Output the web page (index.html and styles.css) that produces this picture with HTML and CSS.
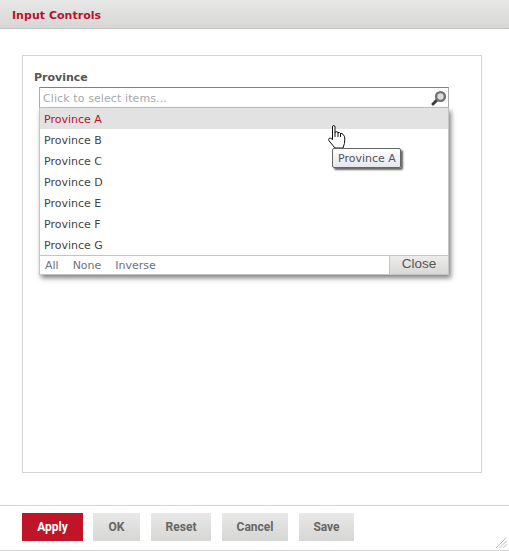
FILE: index.html
```html
<!DOCTYPE html>
<html lang="en">
<head>
  <meta charset="UTF-8" />
  <title>Input Controls</title>
  <link rel="stylesheet" href="styles.css">
</head>
<body>
  <div class="dialog">
    <div class="dialog-header">Input Controls</div>
    <div class="dialog-body">
      <div class="panel">
        <div class="field-label">Province</div>
        <div class="picker">
          <div class="picker-input">
            <span class="placeholder">Click to select items...</span>
            <svg class="search-icon" width="16" height="16" viewBox="0 0 16 16">
              <path d="M6 10 L2 14" stroke="#3a3a3a" stroke-width="3" stroke-linecap="round"/>
              <circle cx="9.5" cy="6.5" r="4.4" fill="#dcdcdc" stroke="#707070" stroke-width="2.4"/>
            </svg>
          </div>
          <div class="picker-menu">
            <ul class="item-list">
              <li class="item item-active">Province A</li>
              <li class="item">Province B</li>
              <li class="item">Province C</li>
              <li class="item">Province D</li>
              <li class="item">Province E</li>
              <li class="item">Province F</li>
              <li class="item">Province G</li>
            </ul>
            <div class="menu-footer">
              <div class="menu-links">
                <span>All</span>
                <span>None</span>
                <span>Inverse</span>
              </div>
              <div class="menu-close">Close</div>
            </div>
          </div>
        </div>
      </div>
    </div>
    <div class="dialog-footer">
      <button class="btn btn-primary">Apply</button>
      <button class="btn btn-ok">OK</button>
      <button class="btn btn-reset">Reset</button>
      <button class="btn btn-cancel">Cancel</button>
      <button class="btn btn-save">Save</button>
      <svg class="grip" width="11" height="11" viewBox="0 0 11 11">
        <path d="M0.5 10.5 L10.5 0.5 M4 10.5 L10.5 4 M7.5 10.5 L10.5 7.5" stroke="#8a8a8a" stroke-width="1" stroke-dasharray="1 0.6"/>
      </svg>
    </div>
  </div>

  <!-- hover state: mouse pointer and tooltip -->
  <svg class="hand-cursor" width="18" height="24" viewBox="0 0 18 24">
    <path d="M4.5 14.5 L4.5 2 Q4.5 0.5 5.7 0.5 Q7 0.5 7 2 L7 8 L7.6 6.8 Q9 6.2 10 7.5 Q11.5 7 12.2 8.4 Q14 8 15.2 9.5 Q16.8 11 16.8 14 L16.4 18.5 L15 23 L7 23 L1 15.8 Q0.2 14.3 1.2 13.3 Q2.5 12.5 4.5 14.5 Z" fill="#fff" stroke="#111" stroke-width="1" stroke-linejoin="round"/>
    <path d="M7 8 L7 12 M10 7.5 L10 12 M12.5 8.5 L12.5 12" stroke="#111" stroke-width="1" fill="none"/>
  </svg>
  <div class="tooltip">Province A</div>
</body>
</html>
```

FILE: styles.css
```css
* {
  box-sizing: border-box;
}
html, body {
  height: 100%;
}
body {
  margin: 0;
  font-family: 'DejaVu Sans', Verdana, sans-serif;
  color: #333;
  background: #fff;
  overflow: hidden;
}
.dialog {
  display: flex;
  flex-direction: column;
  height: 551px;
}
.dialog-header {
  height: 29px;
  padding: 0 12px;
  line-height: 31px;
  font-size: 11px;
  font-weight: bold;
  letter-spacing: 0.03px;
  color: #b9122e;
  background: linear-gradient(#e8e8e8, #d6d6d4);
  border-bottom: 1px solid #c4c4c4;
}
.dialog-body {
  flex: 1;
  padding: 26px 27px 32px 22px;
}
.panel {
  height: 418px;
  padding: 14px 32px 0 11px;
  border: 1px solid #d4d4d4;
}
.field-label {
  height: 17px;
  line-height: 16px;
  font-size: 11px;
  font-weight: bold;
  color: #555;
}
.picker {
  position: relative;
  margin-left: 5px;
  width: 410px;
}
.picker-input {
  display: flex;
  align-items: center;
  justify-content: space-between;
  height: 21px;
  padding: 0 1px 0 3px;
  border: 1px solid #ababab;
  border-top-color: #808080;
  border-bottom: 1px solid #c4c4c4;
}
.placeholder {
  padding-top: 2px;
  font-size: 11px;
  letter-spacing: 0.1px;
  color: #a8a8a8;
}
.search-icon {
  display: block;
}
.picker-menu {
  position: absolute;
  top: 21px;
  left: 0;
  width: 410px;
  background: #fff;
  border: 1px solid #c4c4c4;
  border-top: 0;
  box-shadow: 2px 3px 5px rgba(0, 0, 0, 0.5);
}
.item-list {
  margin: 0;
  padding: 0;
  list-style: none;
}
.item {
  height: 21px;
  padding-left: 4px;
  line-height: 23px;
  font-size: 11px;
  color: #444;
}
.item-active {
  background: #e2e2e2;
  color: #b9122e;
}
.menu-footer {
  display: flex;
  justify-content: space-between;
  height: 19px;
  border-top: 1px solid #c4c4c4;
}
.menu-links {
  display: flex;
  gap: 14px;
  padding-left: 5px;
  line-height: 19px;
  font-size: 11px;
  color: #6b7280;
}
.menu-close {
  width: 59px;
  text-align: center;
  line-height: 15px;
  font-family: 'Liberation Sans', Arial, sans-serif;
  font-size: 13.5px;
  color: #555;
  background: linear-gradient(#ececec, #d8d8d6);
  border-left: 1px solid #c4c4c4;
}
.dialog-footer {
  position: relative;
  display: flex;
  align-items: flex-start;
  height: 46px;
  padding: 7px 22px 0;
  border-top: 1px solid #d4d4d4;
  border-bottom: 1px solid #d4d4d4;
}
.btn {
  height: 28px;
  margin-right: 10px;
  padding: 0;
  border: 0;
  font-family: Roboto, 'Liberation Sans', sans-serif;
  font-size: 12px;
  font-weight: bold;
  color: #666;
  background: linear-gradient(#e8e8e8, #d6d6d4);
}
.btn-primary {
  width: 61px;
  color: #fff;
  background: #c01428;
}
.btn-ok {
  width: 47px;
  margin-right: 11px;
}
.btn-reset {
  width: 60px;
  margin-right: 11px;
}
.btn-cancel {
  width: 66px;
  margin-right: 11px;
}
.btn-save {
  width: 55px;
  margin-right: 0;
}
.grip {
  position: absolute;
  right: 2px;
  bottom: 2px;
}
.hand-cursor {
  position: absolute;
  left: 328px;
  top: 125px;
}
.tooltip {
  position: absolute;
  left: 332px;
  top: 148px;
  width: 69px;
  height: 20px;
  padding-left: 5px;
  line-height: 20px;
  font-size: 11px;
  color: #555;
  background: linear-gradient(#fff, #e6e6f0);
  border: 1px solid #666;
  border-radius: 2px;
  box-shadow: 2px 2px 2px rgba(0, 0, 0, 0.6);
}
```
